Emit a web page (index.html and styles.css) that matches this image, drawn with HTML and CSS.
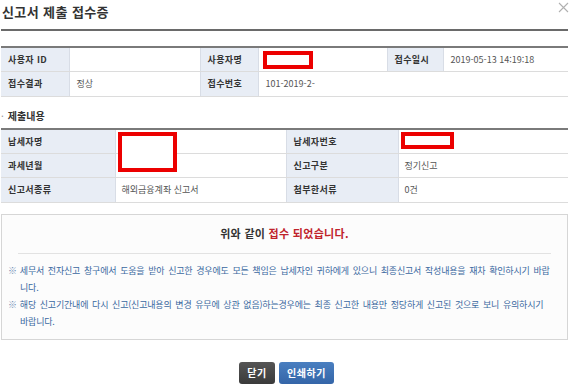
FILE: index.html
```html
<!DOCTYPE html>
<html lang="ko">
<head>
  <meta charset="UTF-8" />
  <title>신고서 제출 접수증</title>
  <link rel="stylesheet" href="styles.css">
</head>
<body>
  <div class="popup">
    <div class="popup-head">
      <h1>신고서 제출 접수증</h1>
      <button class="close" aria-label="닫기">
        <svg width="11" height="11" viewBox="0 0 11 11"><path d="M1 1L10 10M10 1L1 10" stroke="#b0b0b0" stroke-width="1.1" fill="none"/></svg>
      </button>
    </div>

    <table class="info info-top">
      <colgroup>
        <col style="width:68px"><col style="width:131px"><col style="width:58px">
        <col style="width:129px"><col style="width:56px"><col>
      </colgroup>
      <tr>
        <th>사용자 ID</th>
        <td></td>
        <th>사용자명</th>
        <td class="has-mask"><span class="mask mask-name"></span></td>
        <th>접수일시</th>
        <td>2019-05-13 14:19:18</td>
      </tr>
      <tr>
        <th>접수결과</th>
        <td>정상</td>
        <th>접수번호</th>
        <td colspan="3">101-2019-2-</td>
      </tr>
    </table>

    <h2 class="section-title">제출내용</h2>

    <table class="info info-detail">
      <colgroup>
        <col style="width:114px"><col style="width:171px"><col style="width:112px"><col>
      </colgroup>
      <tr>
        <th>납세자명</th>
        <td class="has-mask"><span class="mask mask-payer"></span></td>
        <th>납세자번호</th>
        <td class="has-mask"><span class="mask mask-no"></span></td>
      </tr>
      <tr>
        <th>과세년월</th>
        <td></td>
        <th>신고구분</th>
        <td>정기신고</td>
      </tr>
      <tr>
        <th>신고서종류</th>
        <td>해외금융계좌 신고서</td>
        <th>첨부한서류</th>
        <td>0건</td>
      </tr>
    </table>

    <div class="notice">
      <p class="notice-title">위와 같이 <em>접수 되었습니다.</em></p>
      <ul class="notice-list">
        <li>세무서 전자신고 창구에서 도움을 받아 신고한 경우에도 모든 책임은 납세자인 귀하에게 있으니 최종신고서 작성내용을 재차 확인하시기 바랍<wbr>니다.</li>
        <li>해당 신고기간내에 다시 신고(신고내용의 변경 유무에 상관 없음)하는경우에는 최종 신고한 내용만 정당하게 신고된 것으로 보니 유의하시기 바랍니다.</li>
      </ul>
    </div>

    <div class="buttons">
      <button class="btn btn-dark">닫기</button>
      <button class="btn btn-blue">인쇄하기</button>
    </div>
  </div>
</body>
</html>
```

FILE: styles.css
```css
* { box-sizing: border-box; }
body { margin: 0; background: #fff; font-family: "Noto Sans CJK KR", "Noto Sans", sans-serif; color: #333; }
.popup { width: 568px; padding-left: 1px; }

.popup-head { display: flex; justify-content: space-between; align-items: flex-start; height: 31px; border-bottom: 2px solid #6a6a6a; }
.popup-head h1 { margin: 3px 0 0 1px; font-size: 13px; font-weight: 700; color: #333; letter-spacing: 0.4px; line-height: 18px; }
.close { border: none; background: none; padding: 0; margin: 2px -1px 0 0; width: 11px; height: 11px; cursor: pointer; }
.close svg { display: block; }

.info { width: 100%; border-collapse: collapse; table-layout: fixed; font-size: 9px; }
.info th, .info td { height: 24.5px; padding: 0 7px; border-bottom: 1px solid #dcdcdc; text-align: left; white-space: nowrap; }
.info th { background: #e8edf5; color: #333; font-weight: 700; letter-spacing: 0.4px; border-right: 1px solid #d8dde6; border-left: 1px solid #d8dde6; }
.info td { color: #555; }
.info tr:first-child th, .info tr:first-child td { border-top: 2px solid #7a7a7a; }
.info-top { margin-top: 15px; }
.info-top th:first-child { border-left: none; }
.info-detail th:first-child { border-left: none; }
.info-detail td { padding-left: 6px; }

.has-mask { position: relative; }
.mask { position: absolute; border: 4px solid #ec0000; background: #fff; }
.mask-name { left: 4px; top: 3px; width: 50px; height: 18px; }
.mask-payer { left: 2px; top: 2px; width: 59px; height: 40px; z-index: 1; }
.mask-no { left: 2px; top: 2px; width: 53px; height: 17px; }

.section-title { margin: 9px 0 0 0; height: 22px; font-size: 10px; font-weight: 700; color: #333; line-height: 14px; padding-top: 3px; }
.section-title::before { content: "·"; color: #999; margin-right: 4px; font-weight: 400; }

.notice { margin-top: 11px; border: 1px solid #d6d6d6; background: #fcfcfc; height: 126px; padding: 0 12px 0 6px; }
.notice-title { margin: 9px 4px 0 10px; padding-bottom: 11px; border-bottom: 1px solid #e2e2e2; text-align: center; font-size: 11px; font-weight: 700; color: #333; line-height: 18px; letter-spacing: 0.3px; }
.notice-title em { font-style: normal; color: #c0232b; }
.notice-list { list-style: none; margin: 8px 0 0 0; padding: 0; font-size: 9px; color: #3a68a0; line-height: 17px; letter-spacing: -0.2px; word-spacing: 1.5px; }
.notice-list li { padding-left: 12px; text-indent: -12px; word-break: keep-all; }
.notice-list li::before { content: "※"; margin-right: 3px; color: #6d8db5; }

.buttons { display: flex; justify-content: center; gap: 4px; margin-top: 22px; padding-left: 4px; }
.btn { height: 22px; border: none; border-radius: 3px; color: #fff; font-family: inherit; font-size: 10px; font-weight: 700; letter-spacing: 0.5px; padding: 0; cursor: pointer; }
.btn-dark { width: 36px; background: linear-gradient(#555, #3a3a3a); }
.btn-blue { width: 55px; background: linear-gradient(#4a7fc0, #3465a8); }
```
